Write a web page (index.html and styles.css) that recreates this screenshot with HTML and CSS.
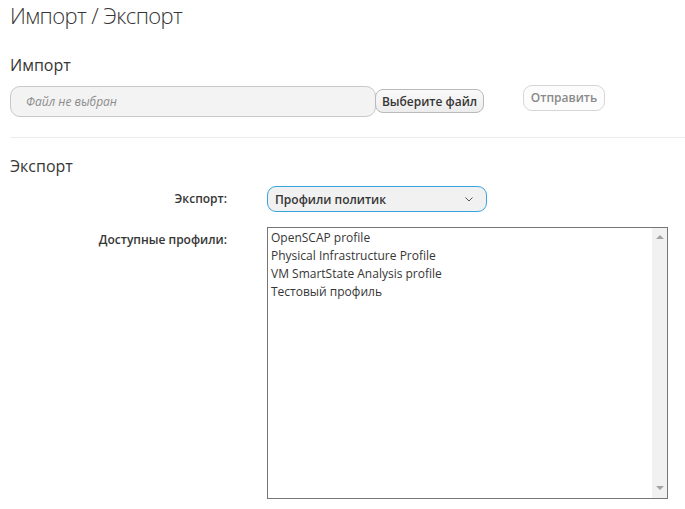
FILE: index.html
```html
<!DOCTYPE html>
<html lang="ru">
<head>
<meta charset="utf-8">
<title>Импорт / Экспорт</title>
<link rel="stylesheet" href="styles.css">
</head>
<body>
<div class="page">
  <h1 class="title">Импорт / Экспорт</h1>
  <h2 class="section">Импорт</h2>
  <div class="import-row">
    <div class="file-field">Файл не выбран</div>
    <button class="btn-choose" type="button">Выберите файл</button>
    <button class="btn-send" type="button" disabled>Отправить</button>
  </div>
  <div class="divider"></div>
  <h2 class="section section-export">Экспорт</h2>
  <div class="form-row row-select">
    <div class="label">Экспорт:</div>
    <div class="select">
      <span>Профили политик</span>
      <svg class="chev" width="8" height="5" viewBox="0 0 8 5"><path d="M0.5 0.5 L4 4 L7.5 0.5" fill="none" stroke="#555" stroke-width="1"/></svg>
    </div>
  </div>
  <div class="form-row row-list">
    <div class="label">Доступные профили:</div>
    <div class="listbox">
      <div class="options">
        <div class="opt">OpenSCAP profile</div>
        <div class="opt">Physical Infrastructure Profile</div>
        <div class="opt">VM SmartState Analysis profile</div>
        <div class="opt">Тестовый профиль</div>
      </div>
      <div class="scrollbar">
        <svg class="arr" width="8" height="5" viewBox="0 0 8 5"><path d="M0 5 L4 1 L8 5 Z" fill="#a3a3a3"/></svg>
        <svg class="arr" width="8" height="5" viewBox="0 0 8 5"><path d="M0 0 L4 4 L8 0 Z" fill="#a3a3a3"/></svg>
      </div>
    </div>
  </div>
</div>
</body>
</html>
```

FILE: styles.css
```css
html, body {
  margin: 0;
  padding: 0;
  background: #fff;
}
body {
  font-family: "Open Sans", "Liberation Sans", sans-serif;
  color: #363636;
}
.page {
  padding: 0 0 0 10px;
}
.title {
  margin: 0;
  font-weight: 300;
  font-size: 22px;
  line-height: 31px;
  letter-spacing: -0.6px;
  color: #363636;
}
.section {
  margin: 23px 0 0 0;
  font-weight: 400;
  font-size: 16px;
  line-height: 22px;
  color: #363636;
}
.import-row {
  display: flex;
  align-items: flex-start;
  margin-top: 10px;
}
.file-field {
  box-sizing: border-box;
  width: 366px;
  height: 31px;
  border: 1px solid #c8c8c8;
  border-radius: 10px;
  background: #f3f3f3;
  font-style: italic;
  font-size: 12px;
  color: #8c8c8c;
  padding: 0 0 0 15px;
  line-height: 29px;
}
.btn-choose {
  box-sizing: border-box;
  margin: 3px 0 0 -1px;
  width: 109px;
  height: 24px;
  border: 1px solid #b9b9b9;
  border-radius: 8px;
  background: linear-gradient(#fafafa, #ececec);
  font-family: "Open Sans", "Liberation Sans", sans-serif;
  font-weight: 600;
  font-size: 12px;
  color: #363636;
  padding: 0;
}
.btn-send {
  box-sizing: border-box;
  margin: -1px 0 0 39px;
  width: 82px;
  height: 26px;
  border: 1px solid #d6d6d6;
  border-radius: 9px;
  background: #fcfcfc;
  font-family: "Open Sans", "Liberation Sans", sans-serif;
  font-weight: 600;
  font-size: 12px;
  color: #8a8a8a;
  padding: 0 0 2px 0;
}
.divider {
  height: 1px;
  background: #ececec;
  margin-top: 20px;
}
.section-export {
  margin-top: 17px;
}
.form-row {
  display: flex;
  align-items: flex-start;
}
.label {
  width: 217px;
  text-align: right;
  font-weight: 600;
  font-size: 12px;
  color: #363636;
  margin-right: 40px;
}
.row-select {
  margin-top: 9px;
}
.row-select .label {
  line-height: 25px;
}
.select {
  box-sizing: border-box;
  width: 220px;
  height: 26px;
  border: 1px solid #39a5dc;
  border-radius: 9px;
  background: #f1f1f1;
  display: flex;
  align-items: center;
  justify-content: space-between;
  padding: 0 13px 0 7px;
  font-weight: 600;
  font-size: 12px;
  color: #363636;
}
.chev {
  display: block;
}
.row-list {
  margin-top: 15px;
}
.row-list .label {
  line-height: 26px;
}
.listbox {
  box-sizing: border-box;
  width: 401px;
  height: 272px;
  border: 1px solid #767676;
  display: flex;
  background: #fff;
}
.options {
  flex: 1;
  padding: 1px 0 0 3px;
}
.opt {
  font-size: 12px;
  line-height: 18px;
  color: #363636;
}
.scrollbar {
  width: 15px;
  background: #f1f1f1;
  display: flex;
  flex-direction: column;
  justify-content: space-between;
  align-items: center;
  padding: 6px 0 7px 0;
}
.arr {
  display: block;
}
```
